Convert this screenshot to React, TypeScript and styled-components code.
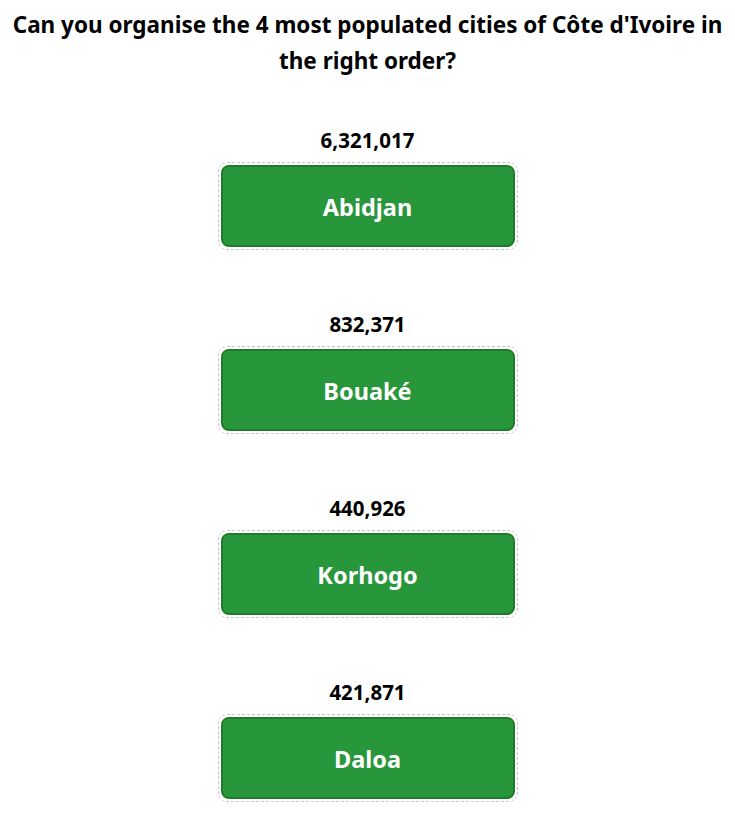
import React from "react";
import styled, { createGlobalStyle } from "styled-components";

const Global = createGlobalStyle`
  html, body { margin: 0; padding: 0; background: #ffffff; }
  body { font-family: "Noto Sans", "Open Sans", sans-serif; color: #000; }
`;

const Page = styled.main`
  display: flex;
  flex-direction: column;
  align-items: center;
  padding: 7px 6px 0;
`;

const Title = styled.h1`
  margin: 0;
  font-size: 22.5px;
  line-height: 36px;
  font-weight: 700;
  text-align: center;
  letter-spacing: 0;
`;

const List = styled.ol`
  list-style: none;
  margin: 48px 0 0;
  padding: 0;
  display: flex;
  flex-direction: column;
  align-items: center;
  gap: 61px;
`;

const Item = styled.li`
  display: flex;
  flex-direction: column;
  align-items: center;
  gap: 9px;
`;

const Population = styled.div`
  font-size: 20.5px;
  font-weight: 700;
  line-height: 26px;
`;

const Slot = styled.div`
  border: 1px dashed #c8c8c8;
  border-radius: 9px;
  padding: 2px;
`;

const CityButton = styled.button`
  display: flex;
  align-items: center;
  justify-content: center;
  width: 294px;
  height: 82px;
  box-sizing: border-box;
  background: #28963a;
  border: 2px solid #1f7a2e;
  border-radius: 8px;
  color: #ffffff;
  font-family: "Noto Sans", "Open Sans", sans-serif;
  font-size: 23.5px;
  font-weight: 700;
  padding-top: 2px;
  cursor: grab;
`;

const cities = [
  { name: "Abidjan", population: "6,321,017" },
  { name: "Bouaké", population: "832,371" },
  { name: "Korhogo", population: "440,926" },
  { name: "Daloa", population: "421,871" },
];

export default function App() {
  return (
    <>
      <Global />
      <Page>
        <Title>
          Can you organise the 4 most populated cities of Côte d'Ivoire in the right order?
        </Title>
        <List>
          {cities.map((c) => (
            <Item key={c.name}>
              <Population>{c.population}</Population>
              <Slot>
                <CityButton>{c.name}</CityButton>
              </Slot>
            </Item>
          ))}
        </List>
      </Page>
    </>
  );
}
